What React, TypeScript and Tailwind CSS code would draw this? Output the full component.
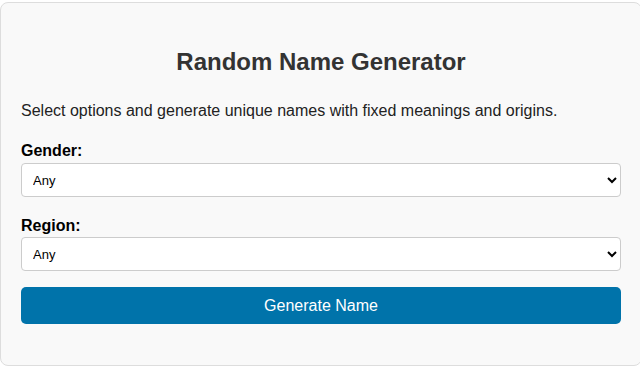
import React, { useState } from 'react';

export default function App() {
  const [gender, setGender] = useState('any');
  const [region, setRegion] = useState('any');

  return (
    <div className="min-h-screen overflow-hidden bg-white pt-[2px] font-['Liberation_Sans',Arial,sans-serif]">
      <div className="w-[642px] rounded-lg border border-[#dddddd] bg-[#f9f9f9] px-5 pt-[45px] pb-[41px]">
        <h2 className="m-0 text-center text-[24px] font-bold leading-[28px] text-[#333333]">Random Name Generator</h2>
        <p className="mt-[26px] text-[16px] leading-[18px] text-[#222222]">
          Select options and generate unique names with fixed meanings and origins.
        </p>

        <label className="mt-[22px] block text-[16px] font-bold leading-[18px] text-black">Gender:</label>
        <select
          value={gender}
          onChange={e => setGender(e.target.value)}
          className="mt-[3px] block h-[34px] w-full rounded-[4px] border border-[#cccccc] bg-white pl-[7px] pr-[6px] text-[13px] text-black"
        >
          <option value="any">Any</option>
          <option value="male">Male</option>
          <option value="female">Female</option>
        </select>

        <label className="mt-[20px] block text-[16px] font-bold leading-[18px] text-black">Region:</label>
        <select
          value={region}
          onChange={e => setRegion(e.target.value)}
          className="mt-[2px] block h-[34px] w-full rounded-[4px] border border-[#cccccc] bg-white pl-[7px] pr-[6px] text-[13px] text-black"
        >
          <option value="any">Any</option>
          <option value="europe">Europe</option>
          <option value="asia">Asia</option>
          <option value="africa">Africa</option>
        </select>

        <button className="mt-[16px] block h-[37px] w-full rounded-[5px] bg-[#0073aa] text-[16px] text-white">
          Generate Name
        </button>
      </div>
    </div>
  );
}
